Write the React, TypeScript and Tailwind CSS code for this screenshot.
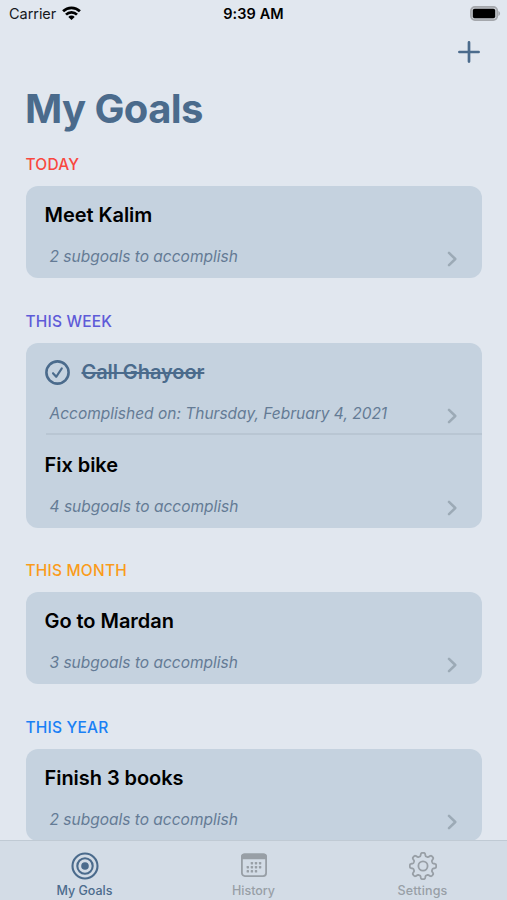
import { useState } from "react";

interface Goal {
  id: string;
  title: string;
  detail: string;
  done?: boolean;
}

interface Section {
  label: string;
  color: string;
  goals: Goal[];
}

const sections: Section[] = [
  {
    label: 'TODAY',
    color: 'text-[#f9473f]',
    goals: [{ id: '1', title: 'Meet Kalim', detail: '2 subgoals to accomplish' }],
  },
  {
    label: 'THIS WEEK',
    color: 'text-[#5e5bd8]',
    goals: [
      { id: '2', title: 'Call Ghayoor', detail: 'Accomplished on: Thursday, February 4, 2021', done: true },
      { id: '3', title: 'Fix bike', detail: '4 subgoals to accomplish' },
    ],
  },
  {
    label: 'THIS MONTH',
    color: 'text-[#fa9c1b]',
    goals: [{ id: '4', title: 'Go to Mardan', detail: '3 subgoals to accomplish' }],
  },
  {
    label: 'THIS YEAR',
    color: 'text-[#1a80f5]',
    goals: [{ id: '5', title: 'Finish 3 books', detail: '2 subgoals to accomplish' }],
  },
];

const WifiIcon = () => (
  <svg className="w-[19px] h-[14px] -mt-0.5" viewBox="0 0 19 14" fill="none" stroke="#000" strokeWidth="2.7">
    <path d="M1.1 5.3a12 12 0 0 1 16.8 0" />
    <path d="M4 8.6a7.8 7.8 0 0 1 11 0" />
    <path d="M9.5 14 6.3 10.9a4.4 4.4 0 0 1 6.4 0Z" fill="#000" stroke="none" />
  </svg>
);

const BatteryIcon = () => (
  <svg className="w-[31px] h-[15px] -mt-0.5" viewBox="0 0 31 15">
    <rect x="0.9" y="0.9" width="26.4" height="13.2" rx="4" fill="#c9cdd3" stroke="#a4a7ac" strokeWidth="1.7" />
    <rect x="2.8" y="2.8" width="22.4" height="9.4" rx="1.8" fill="#000" />
    <path d="M28.4 5c2.2.7 2.2 4.3 0 5Z" fill="#a4a7ac" />
  </svg>
);

const CheckIcon = () => (
  <svg className="w-[25px] h-[25px] mr-3" viewBox="0 0 25 25" fill="none" stroke="#4b6b8c" strokeLinecap="round" strokeLinejoin="round">
    <circle cx="12.5" cy="12.5" r="11.1" strokeWidth="2.6" />
    <path d="m8 13.2 3.2 3.6 5.6-8.4" strokeWidth="2.1" />
  </svg>
);

const ChevronIcon = () => (
  <svg className="w-[10px] h-[16px]" viewBox="0 0 10 16" fill="none" stroke="#9caab6" strokeWidth="2.5" strokeLinecap="round" strokeLinejoin="round">
    <path d="m2 1.9 6.3 6.1-6.3 6.1" />
  </svg>
);

const TargetIcon = () => (
  <svg className="w-[28px] h-[28px]" viewBox="0 0 28 28" fill="none" stroke="currentColor" strokeWidth="2.1">
    <circle cx="14" cy="14" r="12.5" />
    <circle cx="14" cy="14" r="7.7" />
    <circle cx="14" cy="14" r="3.8" fill="currentColor" stroke="none" />
  </svg>
);

const dots = [
  [11.9, 11.2], [16, 11.2], [20.1, 11.2],
  [7.8, 15.2], [11.9, 15.2], [16, 15.2], [20.1, 15.2],
  [7.8, 19.3], [11.9, 19.3], [16, 19.3],
];

const CalendarIcon = () => (
  <svg className="w-[28px] h-[28px]" viewBox="0 0 28 28" fill="none">
    <rect x="1.9" y="2.3" width="24.2" height="21.8" rx="3" stroke="currentColor" strokeWidth="1.8" />
    <path d="M1 7.2V4.8a3.4 3.4 0 0 1 3.4-3.4h19.2A3.4 3.4 0 0 1 27 4.8v2.4Z" fill="currentColor" />
    {dots.map(([x, y]) => (
      <rect key={`${x}-${y}`} x={x - 1.2} y={y - 1.2} width="2.4" height="2.4" rx="0.6" fill="currentColor" />
    ))}
  </svg>
);

// eight rounded teeth around the hub
const gearPath = () => {
  const pts: string[] = [];
  for (let i = 0; i < 160; i++) {
    const a = (i / 160) * Math.PI * 2;
    const wave = Math.tanh(2.3 * Math.cos(8 * a)) / Math.tanh(2.3);
    const r = 11.6 + 1.6 * wave;
    pts.push(`${(14 + r * Math.sin(a)).toFixed(2)} ${(14 - r * Math.cos(a)).toFixed(2)}`);
  }
  return `M${pts.join('L')}Z`;
};

const GearIcon = () => (
  <svg className="w-[28px] h-[28px]" viewBox="0 0 28 28" fill="none" stroke="currentColor" strokeWidth="1.8" strokeLinejoin="round">
    <path d={gearPath()} />
    <circle cx="14" cy="14" r="4.6" />
  </svg>
);

const tabs = [
  { name: 'My Goals', icon: TargetIcon },
  { name: 'History', icon: CalendarIcon },
  { name: 'Settings', icon: GearIcon },
];

function GoalRow({ goal, divided }: { goal: Goal; divided: boolean }) {
  return (
    <div className="pl-5 h-[92.5px]">
      <div className={`h-full pt-[17.5px] ${divided ? 'border-b-2 border-[#b9c6d3]' : ''}`}>
        <div className="flex items-center h-[25px] -ml-px">
          {goal.done && <CheckIcon />}
          <span className={`text-[20px] leading-[25px] whitespace-nowrap ${goal.done ? 'font-semibold tracking-[-0.08px] text-[#4b6b8c] line-through decoration-2' : 'font-semibold tracking-[-0.05px] text-black'}`}>
            {goal.title}
          </span>
        </div>
        <div className="flex items-center justify-between mt-[19px] pl-1 pr-[25px]">
          <span className="text-[15.5px] leading-5 italic text-[#647b95] whitespace-nowrap">{goal.detail}</span>
          <span className="pt-[3px]"><ChevronIcon /></span>
        </div>
      </div>
    </div>
  );
}

export default function App() {
  const [active, setActive] = useState('My Goals');

  return (
    <div className="w-[507px] h-[900px] flex flex-col overflow-hidden bg-[#e1e7ef] font-['Inter',sans-serif]">
      {/* Status bar */}
      <div className="grid grid-cols-3 items-center h-7 shrink-0 pl-[9px] pr-[6px] text-[14.5px]">
        <div className="flex items-center gap-[6px] text-[#16181c]">
          <span className="tracking-[-0.05px]">Carrier</span>
          <WifiIcon />
        </div>
        <div className="text-center font-semibold tracking-[0.1px] -ml-[3px] text-black">9:39 AM</div>
        <div className="flex justify-end"><BatteryIcon /></div>
      </div>

      {/* Add button */}
      <div className="flex justify-end h-[53px] shrink-0 pr-[27px] pt-[13px]">
        <button className="h-[22px]">
          <svg className="w-[22px] h-[22px]" viewBox="0 0 22 22" fill="none" stroke="#4b6b8c" strokeWidth="2.7" strokeLinecap="round">
            <path d="M11 1.4v19.2M1.4 11h19.2" />
          </svg>
        </button>
      </div>

      <h1 className="pl-[25px] h-[69.5px] shrink-0 pt-1 text-[40px] leading-[48px] font-bold tracking-[-0.6px] text-[#4b6b8c]">My Goals</h1>

      {/* Goal list */}
      <div className="flex-1 min-h-0 overflow-hidden pl-[25.5px] pr-[25px]">
        {sections.map((section) => (
          <section key={section.label} className="mb-[29px]">
            <h2 className={`h-[35.3px] pt-[4.5px] text-[15.5px] leading-5 font-medium tracking-[0.2px] ${section.color}`}>{section.label}</h2>
            <div className="rounded-[12px] overflow-hidden bg-[#c5d2df]">
              {section.goals.map((goal, i) => (
                <GoalRow key={goal.id} goal={goal} divided={i < section.goals.length - 1} />
              ))}
            </div>
          </section>
        ))}
      </div>

      {/* Tab bar */}
      <nav className="grid grid-cols-3 h-[60px] shrink-0 border-t border-[#c0cad4] bg-[#d3dce6]">
        {tabs.map(({ name, icon: Icon }) => (
          <button
            key={name}
            onClick={() => setActive(name)}
            className={`flex flex-col items-center pt-[11px] ${active === name ? 'text-[#4b6b8c]' : 'text-[#989fa6]'}`}
          >
            <Icon />
            <span className={`mt-[3px] text-[12.5px] leading-4 font-medium ${name === 'Settings' ? 'tracking-[0.15px]' : ''}`}>{name}</span>
          </button>
        ))}
      </nav>
    </div>
  );
}
